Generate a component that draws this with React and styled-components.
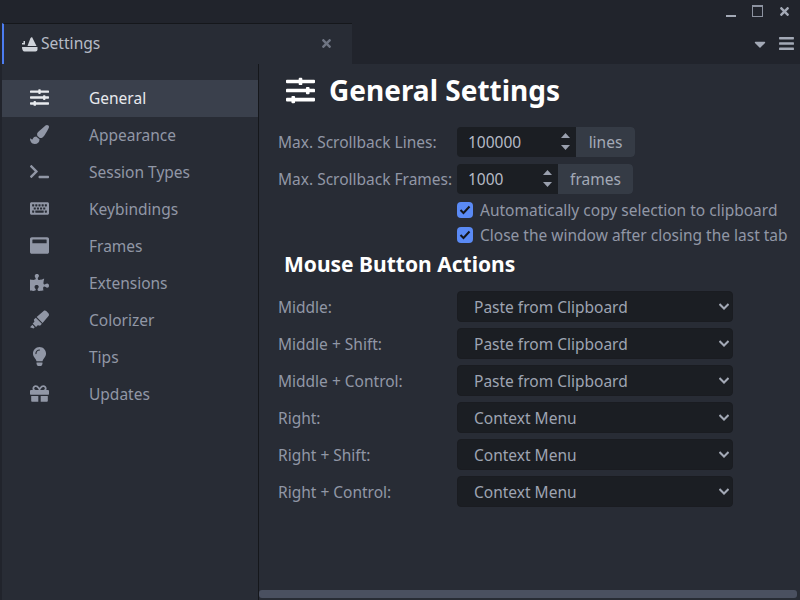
import React from "react";
import styled, { createGlobalStyle } from "styled-components";
import {
  FaSlidersH, FaPaintBrush, FaTerminal, FaKeyboard, FaWindowMaximize,
  FaPuzzlePiece, FaHighlighter, FaLightbulb, FaGift, FaTimes, FaBars, FaCaretDown,
} from "react-icons/fa";

const Global = createGlobalStyle`
  html, body { margin: 0; height: 100%; background: #21242c; overflow: hidden; }
  #root { height: 100%; }
  * { box-sizing: border-box; }
`;
const FONT = `"Noto Sans", "Open Sans", sans-serif`;
const Win = styled.div`
  width: 800px; height: 600px; display: flex; flex-direction: column;
  font-family: ${FONT}; font-size: 15.5px; color: #9aa0ae; background: #21242c;
`;
const TitleBar = styled.div`
  height: 23px; display: flex; justify-content: flex-end; align-items: center;
  gap: 16px; padding: 0 9px 0 0; color: #a3a9b6;
`;
const MinIcon = styled.span`width: 10px; height: 2px; background: #a3a9b6; margin-top: 8px;`;
const MaxIcon = styled.span`width: 11px; height: 12px; border: 1px solid #8d93a1; border-top-width: 2px; margin: -1px -1px 0 0;`;
const TabRow = styled.div`
  height: 41px; display: flex; padding-left: 2px;
`;
const Tab = styled.div`
  width: 350px; background: #282c35; border-left: 2px solid #4c7cf0; border-top: 1px solid #15171b;
  display: flex; align-items: center; padding: 0 19px 0 18px; color: #b6bbc6; font-size: 15.6px;
`;
const TabTitle = styled.span`flex: 1; margin-left: 3px; line-height: 1; margin-top: -1px;`;
const TabClose = styled.span`color: #6f7583; display: flex; font-size: 13px; margin-top: -1px;`;
const TabTools = styled.div`
  flex: 1; display: flex; justify-content: flex-end; align-items: center; gap: 9px; padding-right: 5px; color: #a3a9b6;
`;
const Body = styled.div`flex: 1; display: flex; margin-left: 2px; background: #282c35; min-height: 0;`;
const Side = styled.nav`
  width: 257px; padding-top: 16px; border-right: 1px solid #15171b; display: flex; flex-direction: column;
`;
const NavItem = styled.div`
  height: 37px; display: flex; align-items: center; padding: 0 0 2px 28px;
  background: ${p => (p.$active ? "#3a404c" : "transparent")};
  color: ${p => (p.$active ? "#e8eaee" : "#9197a6")};
`;
const NavIcon = styled.span`width: 59px; display: flex; font-size: 19px;`;
const Main = styled.main`flex: 1; display: flex; flex-direction: column; min-width: 0;`;
const Scroller = styled.div`flex: 1; padding: 9px 12px 0 19px; min-height: 0;`;
const PageTitle = styled.h1`
  margin: 0 0 16px 8px; height: 34px; display: flex; align-items: center; gap: 14px;
  color: #fff; font-size: 28px; font-weight: 700; line-height: 1;
`;
const Row = styled.div`
  height: 37px; display: flex; align-items: center;
`;
const Label = styled.label`width: 179px; flex: none; color: #9197a6; white-space: nowrap;`;
const Group = styled.div`display: flex; height: 30px; border-radius: 4px; overflow: hidden;`;
const Num = styled.div`
  width: ${p => p.$w}px; background: #1b1e23; color: #b6bbc6; display: flex; align-items: center;
  justify-content: space-between; padding: 0 6px 0 11px;
`;
const Spin = styled.span`display: flex; flex-direction: column; gap: 7px;`;
const Addon = styled.span`
  width: ${p => p.$w}px; background: #353b45; color: #a3a9b6; display: flex; align-items: center; justify-content: center;
  border-radius: 0 4px 4px 0;
`;
const Check = styled.label`
  height: 25px; display: flex; align-items: center; gap: 7px; margin-left: 179px; white-space: nowrap; color: #9197a6;
`;
const Box = styled.span`
  width: 16px; height: 16px; border-radius: 4px; background: #5a8af5; display: flex; align-items: center; justify-content: center; flex: none;
`;
const Sub = styled.h2`
  margin: 2px 0 9px 6px; height: 30px; display: flex; align-items: center;
  color: #fff; font-size: 21px; font-weight: 700; line-height: 1;
`;
const SelWrap = styled.div`position: relative; width: 276px; height: 31px;`;
const Sel = styled.select`
  appearance: none; width: 100%; height: 100%; border: 1px solid #1a1c21; border-radius: 4px; background: #1b1e23;
  color: #9ea4b2; font: inherit; padding: 0 30px 0 16px; outline: none;
`;
const Chevron = styled.svg`position: absolute; right: 4px; top: 10px; pointer-events: none;`;
const HScroll = styled.div`height: 12px; padding: 2px 3px 2px 0;`;
const Thumb = styled.div`height: 8px; border-radius: 3px; background: #4a5060;`;

const KnifeIcon = () => (
  <svg width="16" height="15" viewBox="0 0 16 15" fill="#cfd3da">
    <path d="M0 6h1.500V4H3v3.500H0zM5.500 9L8.500 1 10 0l.5 1 4 8zM0 10h15.500v2.500c0 1-1 2-2 2h-11C1 14.500 0 12.500 0 10z" />
  </svg>
);
const Up = () => <svg width="9" height="5" viewBox="0 0 9 5" fill="#9aa0ae"><path d="M4.500 0L9 5H0z" /></svg>;
const Down = () => <svg width="9" height="5" viewBox="0 0 9 5" fill="#9aa0ae"><path d="M4.500 5L0 0h9z" /></svg>;

const nav = [
  ["General", FaSlidersH], ["Appearance", FaPaintBrush], ["Session Types", FaTerminal],
  ["Keybindings", FaKeyboard], ["Frames", FaWindowMaximize], ["Extensions", FaPuzzlePiece],
  ["Colorizer", FaHighlighter], ["Tips", FaLightbulb], ["Updates", FaGift],
];
const selects = [
  ["Middle:", "Paste from Clipboard"], ["Middle + Shift:", "Paste from Clipboard"],
  ["Middle + Control:", "Paste from Clipboard"], ["Right:", "Context Menu"],
  ["Right + Shift:", "Context Menu"], ["Right + Control:", "Context Menu"],
];

export default function App() {
  return (
    <Win>
      <Global />
      <TitleBar>
        <MinIcon /><MaxIcon /><FaTimes size={13} />
      </TitleBar>
      <TabRow>
        <Tab>
          <KnifeIcon />
          <TabTitle>Settings</TabTitle>
          <TabClose><FaTimes /></TabClose>
        </Tab>
        <TabTools><FaCaretDown size={18} /><FaBars size={17} /></TabTools>
      </TabRow>
      <Body>
        <Side>
          {nav.map(([t, I], i) => (
            <NavItem key={t} $active={i === 0}>
              <NavIcon><I /></NavIcon>{t}
            </NavItem>
          ))}
        </Side>
        <Main>
          <Scroller>
            <PageTitle><FaSlidersH size={29} />General Settings</PageTitle>
            <Row>
              <Label>Max. Scrollback Lines:</Label>
              <Group>
                <Num $w={119}>100000<Spin><Up /><Down /></Spin></Num>
                <Addon $w={59}>lines</Addon>
              </Group>
            </Row>
            <Row>
              <Label>Max. Scrollback Frames:</Label>
              <Group>
                <Num $w={101}>1000<Spin><Up /><Down /></Spin></Num>
                <Addon $w={75}>frames</Addon>
              </Group>
            </Row>
            {["Automatically copy selection to clipboard", "Close the window after closing the last tab"].map(t => (
              <Check key={t}>
                <Box>
                  <svg width="12" height="10" viewBox="0 0 12 10" fill="none" stroke="#14161a" strokeWidth="2"><path d="M1.500 5l3 3 6-6.500" /></svg>
                </Box>
                {t}
              </Check>
            ))}
            <Sub>Mouse Button Actions</Sub>
            {selects.map(([l, v]) => (
              <Row key={l}>
                <Label>{l}</Label>
                <SelWrap>
                  <Sel defaultValue={v}>
                    <option>Paste from Clipboard</option>
                    <option>Context Menu</option>
                  </Sel>
                  <Chevron width="10" height="10" viewBox="0 0 10 10" fill="none" stroke="#a3a9b6" strokeWidth="2"><path d="M.5 3l4.500 4.500L9.500 3" /></Chevron>
                </SelWrap>
              </Row>
            ))}
          </Scroller>
          <HScroll><Thumb /></HScroll>
        </Main>
      </Body>
    </Win>
  );
}
